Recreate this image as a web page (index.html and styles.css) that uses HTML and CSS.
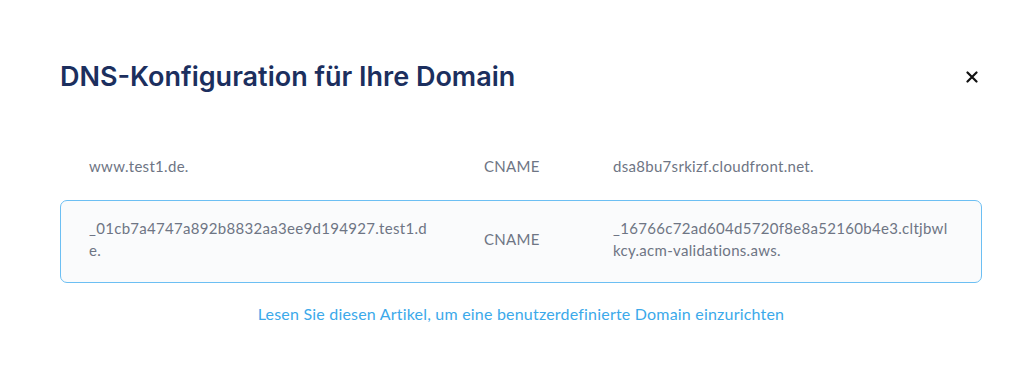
FILE: index.html
```html
<!DOCTYPE html>
<html lang="de">
<head>
<meta charset="utf-8">
<title>DNS-Konfiguration</title>
<link rel="stylesheet" href="styles.css">
</head>
<body>
<div class="modal">
  <div class="header">
    <h2 class="title">DNS-Konfiguration für Ihre Domain</h2>
    <button class="close" aria-label="Schließen">
      <svg width="12" height="12" viewBox="0 0 12 12"><path d="M1.5 1.5L10.5 10.5M10.5 1.5L1.5 10.5" stroke="#111" stroke-width="2.2" stroke-linecap="round"/></svg>
    </button>
  </div>
  <div class="records">
    <div class="record">
      <div class="cell name">www.test1.de.</div>
      <div class="cell type">CNAME</div>
      <div class="cell value">dsa8bu7srkizf.cloudfront.net.</div>
    </div>
    <div class="record selected">
      <div class="cell name">_01cb7a4747a892b8832aa3ee9d194927.test1.de.</div>
      <div class="cell type">CNAME</div>
      <div class="cell value">_16766c72ad604d5720f8e8a52160b4e3.cltjbwlkcy.acm-validations.aws.</div>
    </div>
  </div>
  <div class="footer">
    <a class="link" href="#">Lesen Sie diesen Artikel, um eine benutzerdefinierte Domain einzurichten</a>
  </div>
</div>
</body>
</html>
```
FILE: styles.css
```css
html, body {
  margin: 0;
  background: #ffffff;
}
body {
  font-family: "Lato", "Open Sans", sans-serif;
}
.modal {
  padding: 57px 35px 0 60px;
}
.header {
  display: flex;
  align-items: center;
  justify-content: space-between;
  height: 40px;
}
.title {
  margin: 0;
  font-family: "Inter", sans-serif;
  font-weight: 600;
  font-size: 27px;
  line-height: 40px;
  color: #1c2f5e;
  letter-spacing: 0;
}
.close {
  border: 0;
  background: transparent;
  padding: 0;
  width: 20px;
  height: 20px;
  display: flex;
  align-items: center;
  justify-content: center;
  cursor: pointer;
}
.records {
  margin-top: 37px;
  display: flex;
  flex-direction: column;
  gap: 2px;
}
.record {
  display: grid;
  grid-template-columns: 395px 129px 1fr;
  align-items: center;
  padding: 20px 28px;
  border: 1px solid transparent;
  border-radius: 7px;
  font-size: 15px;
  line-height: 22px;
  letter-spacing: 0.3px;
  color: #6e7584;
}
.cell {
  word-break: break-all;
}
.name {
  max-width: 340px;
}
.value {
  max-width: 338px;
}
.selected {
  padding: 16px 28px 21px;
  border-color: #6cbff3;
  background: #fafbfc;
}
.footer {
  margin-top: 21px;
  text-align: center;
}
.link {
  font-size: 16px;
  line-height: 20px;
  letter-spacing: 0.2px;
  color: #3ba9ea;
  text-decoration: none;
}
```
